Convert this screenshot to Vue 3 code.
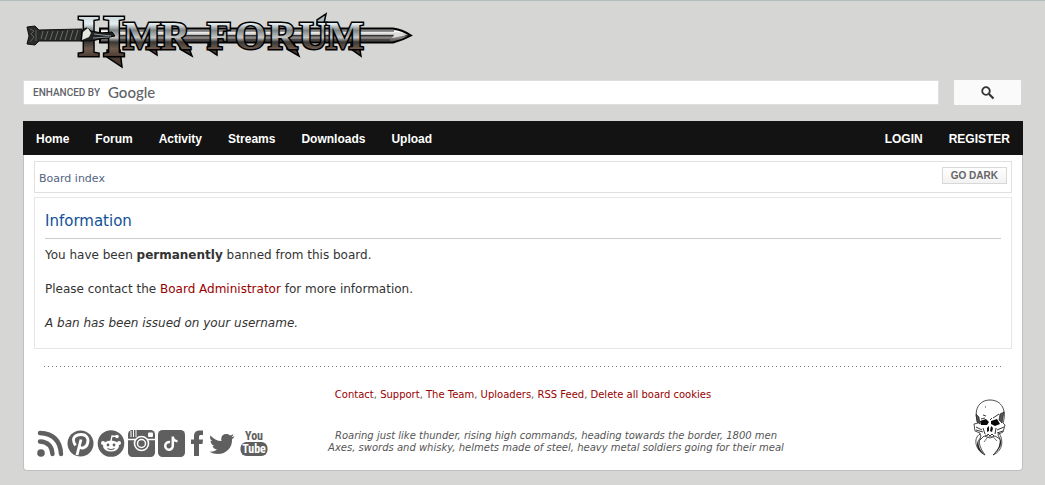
<template>
  <div class="page">
    <header>
      <a href="#" class="logo" aria-label="HMR Forum">
        <svg width="390" height="60" viewBox="24 10 390 60">
          <defs>
            <linearGradient id="steel" gradientUnits="userSpaceOnUse" x1="0" y1="15" x2="0" y2="60">
              <stop offset="0" stop-color="#c9d6da" />
              <stop offset="0.2" stop-color="#e4eef1" />
              <stop offset="0.34" stop-color="#7d8385" />
              <stop offset="0.5" stop-color="#c4c6c6" />
              <stop offset="0.6" stop-color="#3a3837" />
              <stop offset="0.75" stop-color="#6f5a4c" />
              <stop offset="1" stop-color="#3a2e27" />
            </linearGradient>
            <linearGradient id="blade" x1="0" y1="0" x2="0" y2="1">
              <stop offset="0" stop-color="#777" />
              <stop offset="0.2" stop-color="#fff" />
              <stop offset="0.42" stop-color="#ccc" />
              <stop offset="0.5" stop-color="#333" />
              <stop offset="0.62" stop-color="#8e8888" />
              <stop offset="1" stop-color="#4a4545" />
            </linearGradient>
          </defs>

          <!-- blade -->
          <path d="M100 28.500H393Q403 30 411 35.500Q403 40 393 42.500H100Z" fill="url(#blade)" stroke="#000" stroke-width="2" />
          <path d="M118 31H394M118 40H390" stroke="#252525" />
          <path d="M396 32L406 35.500L392 38Z" fill="#ddd" />

          <!-- grip and pommel -->
          <path d="M27 27L35 26L39 30L82 29V41L39 41L35 45L27 44L29 36Z" fill="#292b29" stroke="#111" />
          <path d="M43 31l-2 8M48 31l-3 9M53 31l-3 9M58 31l-3 9M63 31l-3 9M68 30l-3 10M73 30l-3 10M78 30l-3 10" stroke="#696e69" />
          <path d="M30 29l4 2l-3 3l3 3l-4 5M36 30v11" fill="none" stroke="#5c605b" />

          <!-- spikes hanging from the legs -->
          <path d="M107 50H120L122 67L107 57ZM148 44H156L157 55L148 49ZM180 42L187 43L192 56L180 49ZM208 44H217V55L208 49ZM287 42L294 43L299 56L287 49ZM351 44H359L361 56L351 49Z" fill="#4a3a31" stroke="#000" stroke-width="1.500" />
          <path d="M317 25V20L326 14L323 28Z" fill="#aebac0" stroke="#000" stroke-width="1.500" />
          <text class="metal" x="78" y="56" font-size="60">H</text>
          <text class="metal" x="123 161 207 235 268 299 326" y="49" font-size="40">MRFORUM</text>

          <!-- guard across the first letter -->
          <path d="M82 31Q87 25 91 31L102 33L112 32L115 36L100 39L92 41H81Z" fill="#202222" stroke="#000" />
          <path d="M83 32L88 28L91 33L89 37L82 40Z" fill="#e6e6e1" />
          <path d="M94 34L111 36M93 38L109 37" stroke="#8a9296" />
        </svg>
      </a>

      <form class="search" @submit.prevent>
        <div class="search-box">
          <input id="q" v-model="query" type="text" autocomplete="off" />
          <label v-show="!query" for="q">ENHANCED BY <span>Google</span></label>
        </div>
        <button type="submit" aria-label="Search">
          <svg width="14" height="14" viewBox="0 0 14 14">
            <circle cx="5" cy="5" r="3.800" fill="none" stroke="#333" stroke-width="1.800" />
            <path d="M8 8L12.500 12.500" stroke="#333" stroke-width="2.200" />
          </svg>
        </button>
      </form>
    </header>

    <nav>
      <a v-for="item in menu" :key="item" href="#">{{ item }}</a>
      <a href="#" class="push">LOGIN</a>
      <a href="#">REGISTER</a>
    </nav>

    <div class="wrap">
      <div class="crumbs">
        <a href="#">Board index</a>
        <button type="button">GO DARK</button>
      </div>

      <main class="panel">
        <h2>Information</h2>
        <p>You have been <strong>permanently</strong> banned from this board.</p>
        <p>Please contact the <a href="#">Board Administrator</a> for more information.</p>
        <p><em>A ban has been issued on your username.</em></p>
      </main>

      <hr />

      <footer>
        <div class="links">
          <template v-for="(link, i) in links" :key="link">
            <template v-if="i">, </template><a href="#">{{ link }}</a>
          </template>
        </div>

        <div class="social">
          <a href="#" aria-label="RSS">
            <svg width="27" height="27" viewBox="0 0 27 27">
              <circle cx="4" cy="23" r="3.800" />
              <path d="M3 11.500Q14.500 12 15.500 24M3 3Q23 4 24 24" class="line" stroke-width="4.400" stroke-linecap="round" />
            </svg>
          </a>
          <a href="#" aria-label="Pinterest">
            <svg width="27" height="27" viewBox="0 0 27 27">
              <circle cx="13.500" cy="13.500" r="13" />
              <path d="M8.500 15.500C3 7 10 4.500 14 4.500C20 4.500 22 9 20.500 13.500C19 18.500 13.500 19 12.500 16.500M14 9.500L10 25" class="cut" stroke-width="2.800" />
            </svg>
          </a>
          <a href="#" aria-label="Reddit">
            <svg width="28" height="27" viewBox="0 0 28 27">
              <circle cx="14" cy="13.500" r="13.300" />
              <ellipse cx="14" cy="16" rx="8" ry="5.500" class="white" />
              <circle cx="6" cy="13" r="2" class="white" />
              <circle cx="22" cy="13" r="2" class="white" />
              <circle cx="20" cy="6.500" r="1.800" class="white" />
              <path d="M14 11L15 6L20 6.500" class="cut" stroke-width="1.300" />
              <circle cx="11" cy="15" r="1.400" />
              <circle cx="17" cy="15" r="1.400" />
              <path d="M10.500 18.500Q14 20.500 17.500 18.500" class="line" stroke-width="1.100" />
            </svg>
          </a>
          <a href="#" aria-label="Instagram">
            <svg width="27" height="27" viewBox="0 0 27 27">
              <rect width="27" height="27" rx="4.500" />
              <path d="M3 1V7M5.500 0V7M8 0V7" class="cut" stroke-width="1" />
              <rect x="20" y="2.500" width="5" height="4.500" rx="1" class="white" />
              <path d="M0 9.500H27" class="cut" stroke-width="1.500" />
              <circle cx="13.500" cy="13.500" r="7" stroke="#fff" stroke-width="1.600" />
              <circle cx="13.500" cy="13.500" r="4" class="cut" stroke-width="1.500" />
            </svg>
          </a>
          <a href="#" aria-label="TikTok">
            <svg width="27" height="27" viewBox="0 0 27 27">
              <rect width="27" height="27" rx="4.500" />
              <path d="M12 12.200A3.800 3.800 0 1 0 14.800 16V6.500C15 9.500 17 11 19.500 11.200" class="cut" stroke-width="2.500" />
            </svg>
          </a>
          <a href="#" aria-label="Facebook">
            <svg width="18" height="27" viewBox="0 0 18 27">
              <path d="M6 26V14H3V9.500H6V6.500C6 2.500 8 .500 11.500 .500H15V5H12.500Q11 5 11 6.700V9.500H15L14.500 14H11V26Z" />
            </svg>
          </a>
          <a href="#" aria-label="Twitter">
            <svg width="28" height="27" viewBox="0 0 28 27">
              <path d="M1.500 5.500C4.500 9 8 11 12.500 11C11.500 6.500 14 4 17.200 4C19 4 20 4.500 21 5.500Q23 5 24.500 4Q24 6 22.500 7.200Q24 7 25.500 6.300Q24.500 8.300 23 9.300C23.500 18 17 24 9 24Q4 24 .500 21.700Q5 22 8 19.500Q4.500 19 3.500 16H5.500Q2 15 1.500 10.700L3.500 11.300Q0 9 1.500 5.500Z" />
            </svg>
          </a>
          <a href="#" aria-label="YouTube">
            <svg width="28" height="27" viewBox="0 0 28 27">
              <text x="14" y="10" font-size="12" class="thin">You</text>
              <rect x=".500" y="12" width="27" height="14" rx="6" />
              <text x="14" y="23" font-size="12" class="white">Tube</text>
            </svg>
          </a>
        </div>

        <p class="motto">
          Roaring just like thunder, rising high commands, heading towards the border, 1800 men<br />
          Axes, swords and whisky, helmets made of steel, heavy metal soldiers going for their meal
        </p>

        <svg class="skull" width="34" height="58" viewBox="0 0 34 58">
          <path d="M5 24C0 11 6 1 17 1C29 1 34 12 30 24L32 26L30 33L26 35L27 40L22 37L17 39L11 37L7 41V34L2 32L1 25Z" fill="#fff" stroke="#222" stroke-width=".800" />
          <path d="M3 15L6 18L7 25L4 23ZM31 13L29 24L26 21L27 15Z" fill="#555" stroke="#111" stroke-width=".600" />
          <path d="M7 22L13 20L16 23L14 26H8ZM18 22L24 20L27 25L22 27L18 25Z" fill="#080808" />
          <path d="M14 29L16 27V32L14 33ZM18 27L20 29L19 33L17 32Z" fill="#111" />
          <path d="M12 19L8 20M20 19L26 15M12 8h1M10 16l3 1M17 21l2-2M3 28L9 31M3 31L10 33M31 28L24 31M30 32L24 34M10 29L12 35M23 29L22 35M12 36l2 1l1-2l2 2l2-2l2 2" fill="none" stroke="#222" stroke-width=".900" />
          <path d="M8 37C4 44 8 50 12 56C2 51 0 39 7 35ZM25 36C30 44 26 50 20 56C31 51 30 40 26 34Z" fill="#fff" stroke="#222" stroke-width=".800" />
          <path d="M6 40C4 47 8 52 12 56C4 52 2 45 6 40ZM27 39Q31 47 21 55Q28 48 27 39Z" fill="#222" />
          <path d="M11 43Q17 32 24 42" fill="none" stroke="#555" stroke-width=".800" />
        </svg>
      </footer>
    </div>
  </div>
</template>

<script setup>
import { ref } from 'vue'

const query = ref('')

const menu = ['Home', 'Forum', 'Activity', 'Streams', 'Downloads', 'Upload']

const links = ['Contact', 'Support', 'The Team', 'Uploaders', 'RSS Feed', 'Delete all board cookies']
</script>

<style>
body {
  margin: 0;
  background: #d6d6d4;
}
</style>

<style scoped>
* {
  box-sizing: border-box;
}

.page {
  padding: 9px 22px 15px 23px;
  border-top: 1px solid #b3bfbf;
  font-family: Verdana, 'DejaVu Sans', sans-serif;
  font-size: 12px;
  color: #333;
}

a {
  color: #990000;
  text-decoration: none;
}

.logo {
  display: block;
  height: 60px;
  margin-left: 1px;
}

.logo svg {
  display: block;
  overflow: visible;
}

.metal {
  font-family: 'Liberation Serif', serif;
  font-weight: bold;
  fill: url(#steel);
  stroke: #000;
  stroke-width: 3px;
  paint-order: stroke;
}

/* search row */
.search {
  display: flex;
  gap: 15px;
  margin: 10px 2px 16px 0;
}

.search-box {
  position: relative;
  flex: 1;
}

.search input {
  display: block;
  width: 100%;
  height: 25px;
  padding: 0 9px;
  border: 1px solid #dfdfdf;
  outline: none;
}

/* branding lies over the empty input */
.search label {
  display: flex;
  gap: 8px;
  position: absolute;
  left: 10px;
  top: 0;
  font: 500 10px/26px Roboto, sans-serif;
  color: #5f6368;
  pointer-events: none;
}

.search label span {
  font: 500 15px/25px Lato, sans-serif;
}

.search button {
  display: flex;
  align-items: center;
  justify-content: center;
  width: 67px;
  height: 25px;
  padding: 0;
  border: 0;
  border-radius: 1px;
  background: #fafafa;
}

nav {
  display: flex;
  height: 34px;
  background: #131313;
}

nav a {
  padding: 0 13px;
  font: bold 12px/36px Arial, 'Liberation Sans', sans-serif;
  color: #fff;
}

.push {
  margin-left: auto;
}

.wrap {
  padding: 6px 10px 13px;
  border: 1px solid #c0c0c0;
  border-top: 0;
  border-radius: 0 0 4px 4px;
  background: #fff;
}

.crumbs {
  display: flex;
  justify-content: space-between;
  align-items: flex-start;
  height: 32px;
  padding: 5px 4px;
  border: 1px solid #e0e0e0;
  font-size: 11px;
  line-height: 23px;
}

.crumbs a {
  color: #536482;
}

.crumbs button {
  height: 17px;
  padding: 0 8px;
  border: 1px solid #d8d8d8;
  background: linear-gradient(#fff, #f2f2f2);
  font: bold 10px/15px Arial, 'Liberation Sans', sans-serif;
  color: #666;
}

.panel {
  margin-top: 4px;
  padding: 10px 10px 16px;
  border: 1px solid #e6e6e6;
}

h2 {
  margin: 0 0 8px;
  padding-bottom: 4px;
  border-bottom: 1px solid #ccc;
  font-size: 15px;
  font-weight: normal;
  line-height: 26px;
  color: #115098;
}

.panel p {
  margin: 0 0 17px;
  line-height: 17px;
}

.panel p:last-child {
  margin-bottom: 0;
}

/* one dot every four pixels */
hr {
  height: 1px;
  margin: 17px 11px 0 10px;
  border: 0;
  background: repeating-linear-gradient(90deg, #777 0 1px, transparent 1px 4px);
}

footer {
  display: grid;
  grid-template-columns: 234px 1fr 168px;
  grid-template-rows: 41px auto;
  margin-top: 22px;
  font-size: 10px;
  line-height: 12px;
  color: #555;
}

.links {
  grid-area: 1 / 1 / 2 / 4;
  text-align: center;
}

.social {
  display: flex;
  gap: 3px;
  padding-left: 3px;
}

.social svg {
  display: block;
  overflow: visible;
  fill: #5f5f5f;
}

.social .line {
  fill: none;
  stroke: #5f5f5f;
}

.social .cut {
  fill: none;
  stroke: #fff;
}

.social .white {
  fill: #fff;
}

.social text {
  font-family: 'Liberation Sans Narrow', 'Roboto Condensed', 'Liberation Sans', sans-serif;
  font-weight: bold;
  text-anchor: middle;
}

.motto {
  margin: 0;
  text-align: center;
  font-style: italic;
}

.skull {
  grid-area: 1 / 3 / 3 / 4;
  align-self: end;
  justify-self: end;
  margin-right: 5px;
}
</style>
